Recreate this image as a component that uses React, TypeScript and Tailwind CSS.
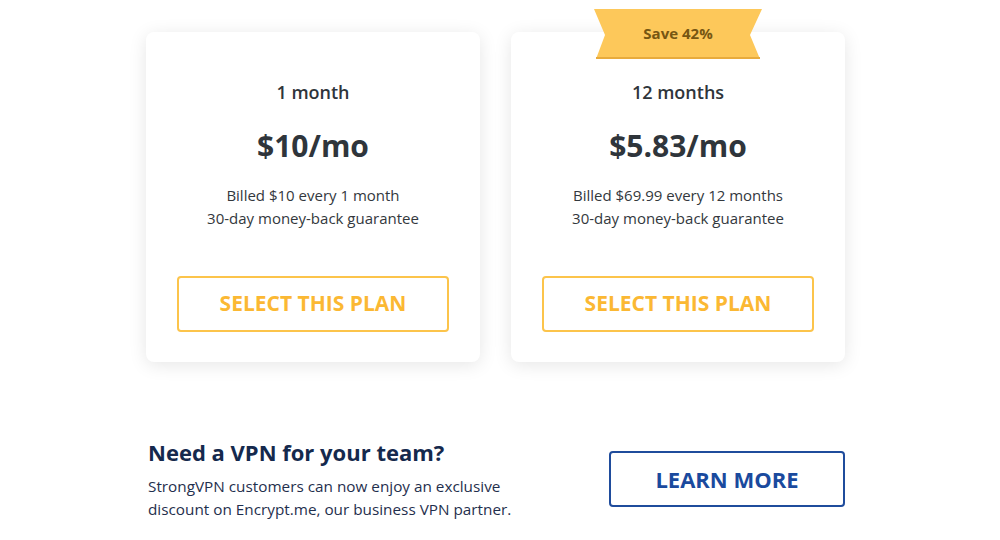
const plans = [
  { term: '1 month', price: '$10/mo', billed: 'Billed $10 every 1 month', badge: null as string | null },
  { term: '12 months', price: '$5.83/mo', billed: 'Billed $69.99 every 12 months', badge: 'Save 42%' },
];

function Ribbon({ label }: { label: string }) {
  return (
    <div className="absolute left-1/2 top-[-23px] h-[50px] w-[170px] -translate-x-1/2">
      <svg width="170" height="50" viewBox="0 0 170 50" className="absolute inset-0">
        <polygon points="1,0 169,0 157,26 167,50 3,50 12,26" fill="#fdc85a" />
        <polygon points="3,48 167,48 167,50 3,50" fill="#e8ab3c" />
      </svg>
      <span className="relative flex h-full items-center justify-center pb-[2px] text-[15px] font-bold text-[#765612]">
        {label}
      </span>
    </div>
  );
}

function PlanCard({ plan }: { plan: (typeof plans)[number] }) {
  return (
    <div className="relative flex h-[330px] w-[334px] flex-col items-center rounded-lg bg-white px-[31px] pt-[48px] shadow-[0_3px_18px_rgba(0,0,0,0.1)]">
      {plan.badge && <Ribbon label={plan.badge} />}
      <div className="text-[18px] font-semibold leading-[24px] text-[#2f353b]">{plan.term}</div>
      <div className="mt-[22px] text-[30px] font-bold leading-[40px] text-[#2f353b]">{plan.price}</div>
      <div className="mt-[18px] text-center text-[15px] leading-[23px] text-[#33383d]">
        <div>{plan.billed}</div>
        <div>30-day money-back guarantee</div>
      </div>
      <button className="mt-[46px] flex h-[56px] w-full items-center justify-center rounded-[4px] border-2 border-[#fcc44b] text-[21px] font-bold text-[#fbb833]">
        SELECT THIS PLAN
      </button>
    </div>
  );
}

export default function App() {
  return (
    <div className="h-[540px] w-[1000px] overflow-hidden bg-white font-['Open_Sans',sans-serif]">
      <div className="ml-[146px] flex gap-[31px] pt-[32px]">
        {plans.map(p => (
          <PlanCard key={p.term} plan={p} />
        ))}
      </div>

      <div className="ml-[148px] mt-[75px] flex w-[697px] items-start justify-between">
        <div>
          <h2 className="text-[22px] font-bold leading-[30px] text-[#15294d]">Need a VPN for your team?</h2>
          <p className="mt-[8px] text-[15.3px] leading-[23px] text-[#1f2f4d]">
            StrongVPN customers can now enjoy an exclusive
            <br />
            discount on Encrypt.me, our business VPN partner.
          </p>
        </div>
        <button className="mt-[14px] flex h-[56px] w-[236px] items-center justify-center rounded-[4px] border-2 border-[#1f4c9c] text-[22px] font-bold text-[#1a4a9e]">
          LEARN MORE
        </button>
      </div>
    </div>
  );
}
